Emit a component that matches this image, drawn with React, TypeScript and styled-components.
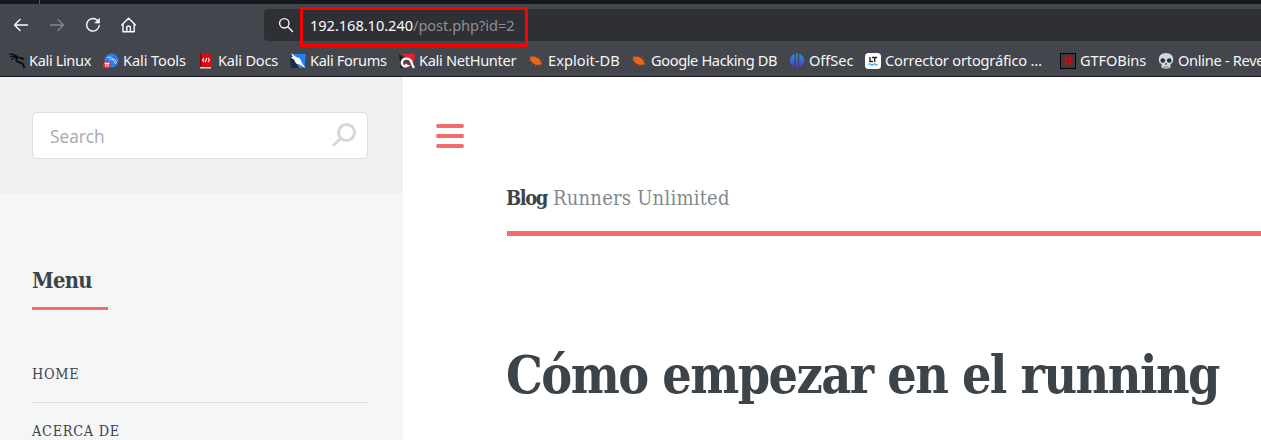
import React from "react";
import styled, { createGlobalStyle } from "styled-components";

const slab = `"Roboto Slab", "DejaVu Serif Condensed", "DejaVu Serif", serif`;

const GlobalStyle = createGlobalStyle`
  *, *::before, *::after { box-sizing: border-box; }
  body { margin: 0; background: #fff; overflow: hidden; }
  h1, h2, p, ul { margin: 0; padding: 0; font-weight: inherit; }
`;

const Window = styled.div`
  width: 1261px;
  height: 440px;
  overflow: hidden;
  display: flex;
  flex-direction: column;
  font-family: "Noto Sans", sans-serif;
`;

const TabStrip = styled.div`
  flex: none;
  height: 4px;
  padding-left: 39px;
  background: #17181e;
`;

const TabSeparator = styled.div`
  width: 1px;
  height: 4px;
  background: #53545a;
`;

const Chrome = styled.header`
  flex: none;
  height: 73px;
  background: #43464d;
  border-bottom: 1px solid #17181e;
`;

const NavBar = styled.div`
  display: flex;
  height: 42px;
  padding-top: 5px;
`;

const NavButtons = styled.div`
  display: flex;
  gap: 20px;
  width: 264px;
  height: 32px;
  padding-left: 13px;
  align-items: center;
`;

const NavIcon = styled.svg<{ $dim?: boolean }>`
  width: 16px;
  height: 16px;
  flex: none;
  overflow: visible;
  fill: none;
  stroke: ${(p) => (p.$dim ? "#85878b" : "#fbfbfe")};
  stroke-width: 1.4;
  stroke-linecap: round;
  stroke-linejoin: round;
`;

const UrlBar = styled.div`
  position: relative;
  display: flex;
  align-items: center;
  flex: 1;
  height: 32px;
  padding-left: 14px;
  gap: 16px;
  border-radius: 4px 0 0 4px;
  background: #2f3035;
`;

const Address = styled.span`
  font-size: 14.6px;
  line-height: 20px;
  letter-spacing: -0.04px;
  white-space: nowrap;
  color: #8f8f92;
`;

const Host = styled.span`
  color: #fbfbfe;
`;

const Highlight = styled.div`
  position: absolute;
  left: 36px;
  top: -2px;
  width: 228px;
  height: 40px;
  border: 3px solid #fe0000;
`;

const Bookmarks = styled.nav`
  display: flex;
  height: 30px;
  padding-left: 9px;
`;

const Bookmark = styled.div<{ $width: number; $spacing: number }>`
  display: flex;
  flex: none;
  align-items: center;
  gap: 4px;
  width: ${(p) => p.$width}px;
  font-size: 14.6px;
  line-height: 20px;
  letter-spacing: ${(p) => p.$spacing}px;
  white-space: nowrap;
  color: #f6f6f8;
`;

const BookmarkLabel = styled.span`
  padding-bottom: 2px;
`;

const Favicon = styled.svg`
  width: 16px;
  height: 16px;
  flex: none;
`;

const Page = styled.div`
  display: flex;
  flex: 1;
  min-height: 0;
`;

const Sidebar = styled.aside`
  flex: none;
  width: 403px;
  background: #f4f6f8;
`;

const SearchSection = styled.div`
  height: 117px;
  padding: 35px 35px 0 32px;
  background: #eef0f2;
`;

const SearchBox = styled.div`
  display: flex;
  align-items: center;
  justify-content: space-between;
  height: 47px;
  padding: 2px 11px 0 17px;
  border: 1px solid #dbdfe1;
  border-radius: 6px;
  background: #fff;
  font-family: "Open Sans", sans-serif;
  font-size: 17.3px;
  color: #a5a9ac;
`;

const SearchGlyph = styled.svg`
  width: 24px;
  height: 26px;
  margin-bottom: 4px;
  fill: none;
  stroke: #d5d8da;
  stroke-width: 3;
  stroke-linecap: round;
`;

const MenuSection = styled.section`
  padding: 70px 35px 0 32px;
  font-family: ${slab};
  color: #3d4449;
`;

const MenuTitle = styled.h2`
  width: 76px;
  height: 46px;
  border-bottom: 3px solid #f56a6a;
  font-size: 21.8px;
  line-height: 34px;
  font-weight: 700;
  letter-spacing: -0.7px;
`;

const MenuList = styled.ul`
  padding-top: 36px;
  list-style: none;
`;

const MenuItem = styled.li`
  height: 57px;
  padding-top: 16px;
  border-bottom: 1px solid #dadddf;
  font-size: 14.4px;
  line-height: 25px;
  letter-spacing: 0.7px;
  text-transform: uppercase;
`;

const Main = styled.main`
  display: flex;
  flex: 1;
  min-width: 0;
  font-family: ${slab};
  color: #3d4449;
`;

const ToggleColumn = styled.div`
  display: flex;
  flex-direction: column;
  gap: 6px;
  flex: none;
  width: 104px;
  padding: 47px 0 0 32.6px;
`;

const ToggleBar = styled.span`
  width: 28.2px;
  height: 4px;
  border-radius: 2px;
  background: #f56a6a;
`;

const Article = styled.div`
  flex: 1;
  min-width: 0;
`;

const SiteHeader = styled.div`
  height: 159px;
  padding-top: 105px;
  border-bottom: 5px solid #f56a6a;
  font-size: 20px;
  line-height: 32px;
  letter-spacing: 0.22px;
  text-indent: -1px;
  white-space: nowrap;
  color: #7f888f;
`;

const SiteName = styled.strong`
  color: #3d4449;
  letter-spacing: -1.4px;
`;

const Headline = styled.h1`
  padding-top: 99px;
  font-size: 51.5px;
  line-height: 80px;
  font-weight: 700;
  letter-spacing: -1.53px;
  text-indent: -1px;
  white-space: nowrap;
`;

const Bug = () => (
  <Favicon viewBox="0 0 16 16">
    <path d="M1 3l4 2M0 7l4 1M3 12l3-2M6 2l2 3M15 8l-4-1M12 3l-2 3M13 13l-4-3M7 14l1-4" stroke="#9b5937" strokeWidth="0.6" />
    <path d="M2.200 4Q6 2.500 9 4.800Q12.500 6 12.500 9L14 11L11 11.800Q8 12.500 5 10Q1.500 8 2.200 4z" fill="#f26415" />
  </Favicon>
);

const bookmarks = [
  {
    label: "Kali Linux", width: 94, spacing: -0.37,
    icon: (
      <Favicon viewBox="0 0 16 16" fill="none" stroke="#0c0d0f">
        <path d="M0 1.2Q6 .4 9 4.5Q12 4 15 6M1 4Q5 2 9 5M2 7Q5 3 9 5.5" strokeWidth="1.2" />
        <path d="M8 4.5Q6 9 10.500 9.500Q15 10 15 15" strokeWidth="1.8" />
        <path d="M10 5Q13 4 14 7" strokeWidth="1.6" />
      </Favicon>
    ),
  },
  {
    label: "Kali Tools", width: 95, spacing: -0.12,
    icon: (
      <Favicon viewBox="0 0 16 16">
        <circle cx="8.500" cy="7.500" r="7" fill="#2d7cf0" />
        <path d="M4 4.500Q8 3 10 6Q13 6 13.500 9.500M6 7Q8 5 10 6.500Q10 8.500 13 11" fill="none" stroke="#c4dcff" strokeWidth="1" />
        <circle cx="3.800" cy="11.700" r="3.800" fill="#e8262d" />
        <path d="M1.500 10.200h5M2.900 10v4M5.100 10v4" stroke="#fff" strokeWidth="1" />
      </Favicon>
    ),
  },
  {
    label: "Kali Docs", width: 92, spacing: -0.23,
    icon: (
      <Favicon viewBox="0 0 16 16">
        <path d="M2 0h11v14H2z" fill="#d90b12" />
        <path d="M2 0h1.500v14H2z" fill="#8e070c" />
        <path d="M2 14h11v1.500H2z" fill="#d8d4d4" />
        <path d="M6 5L4.500 7L6 9M10 5L11.500 7L10 9M8.800 5L7.200 9" fill="none" stroke="#fff" strokeWidth="1.100" />
      </Favicon>
    ),
  },
  {
    label: "Kali Forums", width: 109, spacing: -0.36,
    icon: (
      <Favicon viewBox="0 0 16 16">
        <path d="M2 1h14l-1.500 14H2z" fill="#2480f5" />
        <path d="M0 3l5 4l4 8H1z" fill="#1d2c44" />
        <path d="M1 0L6 4L10 5.500L12 10L15.500 15L9.500 11.500L6 10.500L4 6.500L.5 4.500L3 4z" fill="#fff" />
      </Favicon>
    ),
  },
  {
    label: "Kali NetHunter", width: 129, spacing: -0.31,
    icon: (
      <Favicon viewBox="0 0 16 16">
        <path d="M2 1h14l-1.500 11L10 6z" fill="#e9222f" />
        <path d="M0 1l4 3l-3 5zM1 12l3 3H1z" fill="#1c1d22" />
        <path d="M6.500 10.500L9 12.500Q4 15 3 10.500Q2.500 5.500 8 5.700Q12 6 13 11L15 15" fill="none" stroke="#fff" strokeWidth="2.300" />
        <path d="M5.500 10L8 8.500L11.500 12L9 12z" fill="#c51a25" />
      </Favicon>
    ),
  },
  { label: "Exploit-DB", width: 103, spacing: 0.05, icon: <Bug /> },
  { label: "Google Hacking DB", width: 158, spacing: -0.38, icon: <Bug /> },
  {
    label: "OffSec", width: 76, spacing: -0.05,
    icon: (
      <Favicon viewBox="0 0 16 16">
        <defs>
          <linearGradient id="offsec" x1="0" y1="0" x2="0" y2="1">
            <stop offset="0" stopColor="#1aa0cf" />
            <stop offset="1" stopColor="#5a2bd0" />
          </linearGradient>
        </defs>
        <path d="M5.500 .8V14Q1 12 .8 7.500Q1 3 5.500 .8zM7 .3h1.800v15.400H7zM10.300 .8V14Q15 12 15.200 7.500Q15 3 10.300 .8z" fill="url(#offsec)" />
      </Favicon>
    ),
  },
  {
    label: "Corrector ortográfico …", width: 195, spacing: -0.17,
    icon: (
      <Favicon viewBox="0 0 16 16">
        <rect width="16" height="16" rx="3.500" fill="#fff" />
        <path d="M5 4v4.500h3M7 4.500h5M9.700 4.500V9" fill="none" stroke="#222" strokeWidth="1.400" />
        <path d="M3.500 11.500q1.200-1.400 2.400 0t2.400 0t2.400 0t2 0" fill="none" stroke="#45a4f5" strokeWidth="1.200" />
      </Favicon>
    ),
  },
  {
    label: "GTFOBins", width: 98, spacing: -0.1,
    icon: (
      <Favicon viewBox="0 0 16 16">
        <rect x=".5" y=".5" width="15" height="15" fill="#3b3c40" stroke="#050505" />
        <path d="M6 3v10M10.500 3v10M3 6h10.500M3 10h10.500" stroke="#c90d10" strokeWidth="1.700" />
      </Favicon>
    ),
  },
  {
    label: "Online - Reve", width: 103, spacing: -0.3,
    icon: (
      <Favicon viewBox="0 0 16 16">
        <path d="M8 0Q15.500 0 15.200 7.500Q15 10 12.500 11V14.500Q8 17 3.500 14.500V11Q1 10 .8 7.500Q.5 0 8 0z" fill="#cfd8de" />
        <circle cx="4.800" cy="7.500" r="2.300" fill="#29323a" />
        <circle cx="11.200" cy="7.500" r="2.300" fill="#29323a" />
        <path d="M8 9.500l1.200 2H6.800z" fill="#29323a" />
        <path d="M6 13v2.500M8 13v2.500M10 13v2.500" stroke="#56626c" strokeWidth=".7" />
      </Favicon>
    ),
  },
];

export default function App() {
  return (
    <Window>
      <GlobalStyle />
      <TabStrip>
        <TabSeparator />
      </TabStrip>
      <Chrome>
        <NavBar>
          <NavButtons>
            <NavIcon viewBox="0 0 16 16">
              <path d="M14.500 8H1.500M7 2.500L1.500 8L7 13.500" />
            </NavIcon>
            <NavIcon viewBox="0 0 16 16" $dim>
              <path d="M1.500 8H14.500M9 2.500L14.500 8L9 13.500" />
            </NavIcon>
            <NavIcon viewBox="0 0 16 16">
              <path d="M12.600 3.600A6.300 6.300 0 1 0 14.200 8.500" />
              <path d="M14.500 1.500V6H10z" fill="#fbfbfe" strokeWidth=".6" />
            </NavIcon>
            <NavIcon viewBox="0 0 16 16">
              <path d="M.8 8L7.600 1.200L14.400 8M2 7V14.800H13.200V7M5.800 14.500V10Q5.800 9.200 6.700 9.200H8.500Q9.400 9.200 9.400 10V14.500" />
            </NavIcon>
          </NavButtons>
          <UrlBar>
            <NavIcon viewBox="0 0 16 16">
              <circle cx="6.300" cy="6.300" r="4.700" />
              <path d="M9.800 9.800L14.500 14.400" />
            </NavIcon>
            <Address>
              <Host>192.168.10.240</Host>/post.php?id=2
            </Address>
            <Highlight />
          </UrlBar>
        </NavBar>
        <Bookmarks>
          {bookmarks.map((b) => (
            <Bookmark key={b.label} $width={b.width} $spacing={b.spacing}>
              {b.icon}
              <BookmarkLabel>{b.label}</BookmarkLabel>
            </Bookmark>
          ))}
        </Bookmarks>
      </Chrome>
      <Page>
        <Sidebar>
          <SearchSection>
            <SearchBox>
              Search
              <SearchGlyph viewBox="0 0 24 26">
                <circle cx="14.500" cy="10.500" r="8" />
                <path d="M8.500 16.500L2 23" />
              </SearchGlyph>
            </SearchBox>
          </SearchSection>
          <MenuSection>
            <MenuTitle>Menu</MenuTitle>
            <MenuList>
              <MenuItem>Home</MenuItem>
              <MenuItem>Acerca de</MenuItem>
            </MenuList>
          </MenuSection>
        </Sidebar>
        <Main>
          <ToggleColumn>
            <ToggleBar />
            <ToggleBar />
            <ToggleBar />
          </ToggleColumn>
          <Article>
            <SiteHeader>
              <SiteName>Blog</SiteName> Runners Unlimited
            </SiteHeader>
            <Headline>Cómo empezar en el running</Headline>
          </Article>
        </Main>
      </Page>
    </Window>
  );
}
